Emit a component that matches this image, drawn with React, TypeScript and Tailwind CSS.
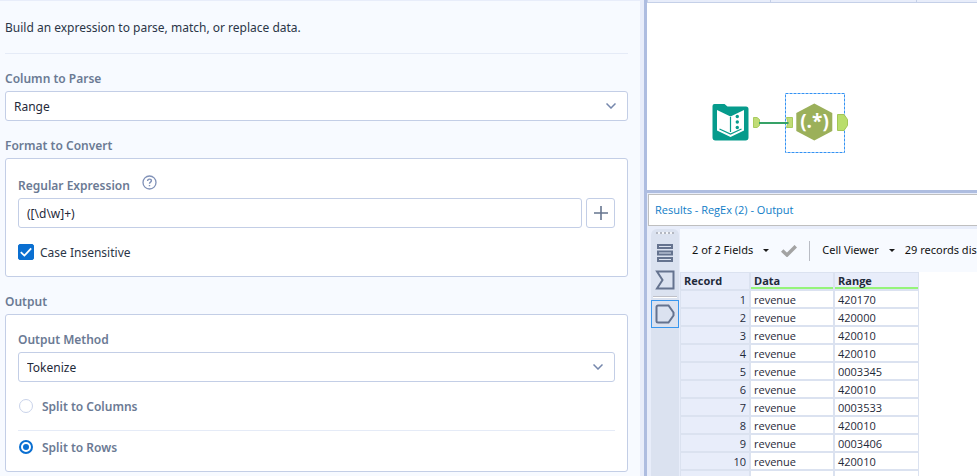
import type { ReactNode } from "react";

const rows = [
  "420170",
  "420000",
  "420010",
  "420010",
  "0003345",
  "420010",
  "0003533",
  "420010",
  "0003406",
  "420010",
  "420010",
];

const fieldClass =
  "h-[30px] w-full rounded-[3px] border border-[#c3cee6] bg-white px-2 pt-px text-[12px] text-[#1f2a3a] outline-none";

const captionClass = "block h-5 text-[12px] leading-[22px] font-semibold text-[#6b7a94]";

function Dropdown({ id, value, options }: { id: string; value: string; options: string[] }) {
  return (
    <div className="grid items-center">
      <select
        id={id}
        defaultValue={value}
        className={`${fieldClass} col-start-1 row-start-1 appearance-none`}
      >
        {options.map((option) => (
          <option key={option}>{option}</option>
        ))}
      </select>
      <svg
        viewBox="0 0 10 6"
        className="pointer-events-none col-start-1 row-start-1 mr-3 h-1.5 w-2.5 justify-self-end"
        fill="none"
        stroke="#7587ac"
        strokeWidth="1.5"
      >
        <path d="M0.5 0.5 5 5 9.5 0.5" />
      </svg>
    </div>
  );
}

function RadioRow({ label, checked }: { label: string; checked?: boolean }) {
  return (
    <label className="flex h-5 items-center gap-[9px] pl-px text-[12px] font-semibold text-[#6b7a94]">
      <input
        type="radio"
        name="split"
        defaultChecked={checked}
        className="m-0 size-3.5 appearance-none rounded-full border border-[#c9d3ea] bg-white checked:border-2 checked:border-[#0a6fd1] checked:bg-[#0a6fd1] checked:bg-clip-content checked:p-0.5"
      />
      <span className="pt-0.5">{label}</span>
    </label>
  );
}

function Caption({ htmlFor, children }: { htmlFor: string; children: ReactNode }) {
  return (
    <label htmlFor={htmlFor} className={captionClass}>
      {children}
    </label>
  );
}

function ConfigPanel() {
  return (
    <section className="overflow-hidden border-t border-r-4 border-[#e8edfa] bg-[#f7faff] pr-3 pl-[5px]">
      <p className="h-[53px] border-b border-[#e5ebf7] pt-4 text-[12px] leading-[22px] text-[#2b3647]">
        Build an expression to parse, match, or replace data.
      </p>

      <div className="pt-3.5">
        <Caption htmlFor="column">Column to Parse</Caption>
        <div className="mt-[3px]">
          <Dropdown id="column" value="Range" options={["Range", "Data"]} />
        </div>
      </div>

      <fieldset className="pt-3.5">
        <legend className="contents">
          <span className={captionClass}>Format to Convert</span>
        </legend>
        <div className="mt-[3px] h-[119px] rounded-[3px] border border-[#c3cee6] bg-white px-3 pt-4">
          <div className="flex h-5 items-center gap-3">
            <Caption htmlFor="regex">Regular Expression</Caption>
            <button type="button" aria-label="Help" className="mb-1.5 size-[15px]">
              <svg viewBox="0 0 15 15" className="size-[15px]" fill="none" stroke="#8192b8">
                <circle cx="7.5" cy="7.5" r="6.5" strokeWidth="1.3" />
                <path d="M5.6 6c0-1.1.8-1.9 1.9-1.9s1.9.7 1.9 1.7c0 1.3-1.9 1.4-1.9 2.9M7.5 9.9v1.3" strokeWidth="1.4" />
              </svg>
            </button>
          </div>
          <div className="mt-[3px] flex gap-1">
            <input id="regex" type="text" defaultValue="([\d\w]+)" className={fieldClass} />
            <button
              type="button"
              aria-label="Add expression"
              className="flex h-[30px] w-[29px] shrink-0 items-center justify-center rounded-[3px] border border-[#c3cee6] bg-white"
            >
              <svg viewBox="0 0 14 14" className="size-3.5" stroke="#66758f" strokeWidth="1.6">
                <path d="M0 7h14M7 0v14" />
              </svg>
            </button>
          </div>
          <label className="mt-3.5 flex h-5 items-center gap-1.5 text-[12px] text-[#2b3647]">
            <span className="grid size-4 items-center">
              <input
                type="checkbox"
                defaultChecked
                className="peer col-start-1 row-start-1 m-0 size-4 appearance-none rounded-[2px] border border-[#0a6fd1] checked:bg-[#0a6fd1]"
              />
              <svg
                viewBox="0 0 16 16"
                className="pointer-events-none invisible col-start-1 row-start-1 size-4 peer-checked:visible"
                fill="none"
                stroke="white"
                strokeWidth="1.8"
              >
                <path d="M2.8 8.2 6.4 11.6 13.2 4.4" />
              </svg>
            </span>
            <span className="pt-0.5">Case Insensitive</span>
          </label>
        </div>
      </fieldset>

      <fieldset className="pt-3.5">
        <legend className="contents">
          <span className={captionClass}>Output</span>
        </legend>
        <div className="mt-[3px] h-[158px] rounded-[3px] border border-[#c3cee6] bg-white px-3 pt-3.5">
          <Caption htmlFor="method">Output Method</Caption>
          <div className="mt-[3px]">
            <Dropdown
              id="method"
              value="Tokenize"
              options={["Tokenize", "Replace", "Parse", "Match"]}
            />
          </div>
          <div className="border-b border-[#e5ebf7] pt-3.5 pb-3.5">
            <RadioRow label="Split to Columns" />
          </div>
          <div className="pt-1.5">
            <RadioRow label="Split to Rows" checked />
          </div>
        </div>
      </fieldset>
    </section>
  );
}

function Canvas() {
  return (
    <div className="relative h-[187px] overflow-hidden bg-white">
      <svg viewBox="705 88 150 70" className="absolute top-[85px] left-[58px] h-[70px] w-[150px]">
        <path
          d="M714.5 104h10l3 2.500h18.500a2.500 2.500 0 0 1 2.500 2.500v28.500a3 3 0 0 1-3 3h-30a3 3 0 0 1-3-3v-31.500a2 2 0 0 1 2-2z"
          fill="#069b8c"
        />
        <path d="M717 110l13.500 6.500 13.500-6.500v20.500l-13.500 6.500-13.500-6.500z" fill="white" />
        <path d="M730.500 117v15M719.500 129l11 5 11-5" fill="none" stroke="#069b8c" strokeWidth="1.200" />
        <g fill="#069b8c">
          <circle cx="737.300" cy="116.500" r="1.700" />
          <circle cx="737.300" cy="122" r="1.700" />
          <circle cx="737.300" cy="127.500" r="1.700" />
        </g>
        <rect
          x="785.500"
          y="93.500"
          width="59"
          height="59"
          fill="none"
          stroke="#3492f3"
          strokeDasharray="3 1"
        />
        <path d="M753.500 117.500h3.500l2.500 2v6l-2.500 2h-3.500z" fill="#c0dc76" stroke="#a9cb5e" />
        <path d="M786.500 117.500h6v10h-6l1.500-5z" fill="#c0dc76" stroke="#a9cb5e" />
        <path d="M759 123h29.500" stroke="#36a267" strokeWidth="2" />
        <path d="M814.300 103.500 832.300 113v18l-18 9.500-18-9.500v-18z" fill="#9bb05a" />
        <text
          x="814.5"
          y="128"
          textAnchor="middle"
          fill="white"
          className="font-['Open_Sans',sans-serif] text-[19px] font-bold"
        >
          (.*)
        </text>
        <path d="M837.500 114.500h6.500l3.500 5v6l-3.500 5h-6.500z" fill="#b9de6b" stroke="#a3c656" />
      </svg>
    </div>
  );
}

function Caret() {
  return (
    <svg viewBox="0 0 6 3" className="h-[3px] w-1.5 shrink-0" fill="#1a1a1a">
      <path d="M0 0h6L3 3z" />
    </svg>
  );
}

function ResultRail() {
  return (
    <nav className="flex w-7 shrink-0 flex-col items-center rounded-t-md bg-[#dbe2f0]">
      <div className="mt-[3px] h-0.5 w-[18px] shrink-0 bg-[repeating-linear-gradient(90deg,#b4b8c2_0_2px,#f4f6fa_2px_4px)]" />
      <button type="button" aria-label="Messages" className="mt-2 h-[22px]">
        <svg viewBox="0 0 18 20" className="h-5 w-[18px]" fill="none" stroke="#65738f" strokeWidth="2">
          <path d="M2 2h14v3H2zM2 8.500h14v3H2zM2 15h14v3H2z" />
        </svg>
      </button>
      <button type="button" aria-label="Input anchor" className="mt-1.5 h-5">
        <svg viewBox="0 0 20 20" className="size-5" fill="none" stroke="#65738f" strokeWidth="2">
          <path d="M2 1.500h16.500v17H2l5.500-8.500z" />
        </svg>
      </button>
      <div className="mt-1.5 h-0.5 w-6 shrink-0 border-t border-[#bfc0c8] bg-white" />
      <button
        type="button"
        aria-label="Output anchor"
        className="mt-0.5 flex h-7 w-7 shrink-0 items-center justify-center border border-[#3a97ee]"
      >
        <svg viewBox="0 0 20 20" className="size-5" fill="none" stroke="#65738f" strokeWidth="2">
          <path d="M3 1.500h10.500l5 7v3l-5 7H3a1.500 1.500 0 0 1-1.500-1.500V3A1.500 1.500 0 0 1 3 1.500z" />
        </svg>
      </button>
    </nav>
  );
}

function ResultsTable() {
  return (
    <table className="w-[239px] table-fixed border-separate border-spacing-0 border-t border-l border-[#dbe2f0] font-['Open_Sans','Noto_Sans',sans-serif] text-[11px] leading-4 text-[#1f2a3a]">
      <colgroup>
        <col className="w-[70px]" />
        <col className="w-[84px]" />
        <col className="w-[84px]" />
      </colgroup>
      <thead>
        <tr className="text-left">
          <th className="h-[18px] border-r-2 border-b-2 border-[#dbe2f0] bg-[#e8edfa] p-0 pl-[3px]">
            Record
          </th>
          <th className="h-[18px] border-r-2 border-b-2 border-[#dbe2f0] bg-[#e8edfa] p-0">
            <div className="h-4 border-b-2 border-[#95f47a] pl-[3px]">Data</div>
          </th>
          <th className="h-[18px] border-r border-b-2 border-[#dbe2f0] bg-[#e8edfa] p-0">
            <div className="h-4 border-b-2 border-[#95f47a] pl-[3px]">Range</div>
          </th>
        </tr>
      </thead>
      <tbody className="leading-[18px]">
        {rows.map((range, index) => (
          <tr key={index}>
            <td className="border-r-2 border-b-2 border-[#dbe2f0] bg-[#e8edfa] p-0 pr-[3px] text-right">
              <div className="h-4">{index + 1}</div>
            </td>
            <td className="border-r-2 border-b-2 border-[#dbe2f0] bg-white p-0 pl-[3px]">
              <div className="h-4">revenue</div>
            </td>
            <td className="border-r border-b-2 border-[#dbe2f0] bg-white p-0 pl-[3px]">
              <div className="h-4">{range}</div>
            </td>
          </tr>
        ))}
      </tbody>
    </table>
  );
}

function Results() {
  return (
    <section className="flex min-h-0 flex-1 flex-col border-t-3 border-[#aebde0] bg-[#e8edfa] pl-px">
      <h2 className="mt-px h-8 shrink-0 border border-r-0 border-[#bfbfbf] bg-white pl-1.5 font-['Open_Sans','Noto_Sans',sans-serif] text-[11px] leading-[30px] text-[#0f7dc7]">
        Results - RegEx (2) - Output
      </h2>
      <div className="mt-[3px] flex min-h-0 flex-1 pl-[3px]">
        <ResultRail />
        <div className="ml-px flex min-w-0 flex-1 flex-col overflow-hidden bg-white">
          <div className="flex h-[43px] shrink-0 items-center bg-[#f7faff] pl-3 text-[11px] whitespace-nowrap text-[#111]">
            <button type="button" className="flex items-center gap-2.5">
              2 of 2 Fields
              <Caret />
            </button>
            <button type="button" aria-label="Apply" className="ml-3">
              <svg viewBox="0 0 16 12" className="h-3 w-4" fill="none" stroke="#a3a3a3" strokeWidth="3.500">
                <path d="M1.200 5.500 6 10 14.800 1.200" />
              </svg>
            </button>
            <div className="ml-3 h-5 w-px shrink-0 bg-[#b9bcc4]" />
            <button type="button" className="ml-3 flex items-center gap-2.5">
              Cell Viewer
              <Caret />
            </button>
            <span className="ml-2.5">29 records displayed</span>
          </div>
          <ResultsTable />
        </div>
      </div>
    </section>
  );
}

export default function App() {
  return (
    <main className="grid h-screen grid-cols-[minmax(0,644fr)_minmax(0,333fr)] overflow-hidden font-['Noto_Sans','Open_Sans',sans-serif]">
      <ConfigPanel />
      <div className="flex min-h-0 flex-col border-l-3 border-[#aebde0]">
        <div className="flex h-[3px] shrink-0 border-b border-l border-[#c5d0e8] bg-[#e8edfa]">
          <div className="w-[123px] border-r border-[#c5d0e8]" />
          <div className="w-[146px] border-r border-[#c5d0e8]" />
        </div>
        <Canvas />
        <Results />
      </div>
    </main>
  );
}
